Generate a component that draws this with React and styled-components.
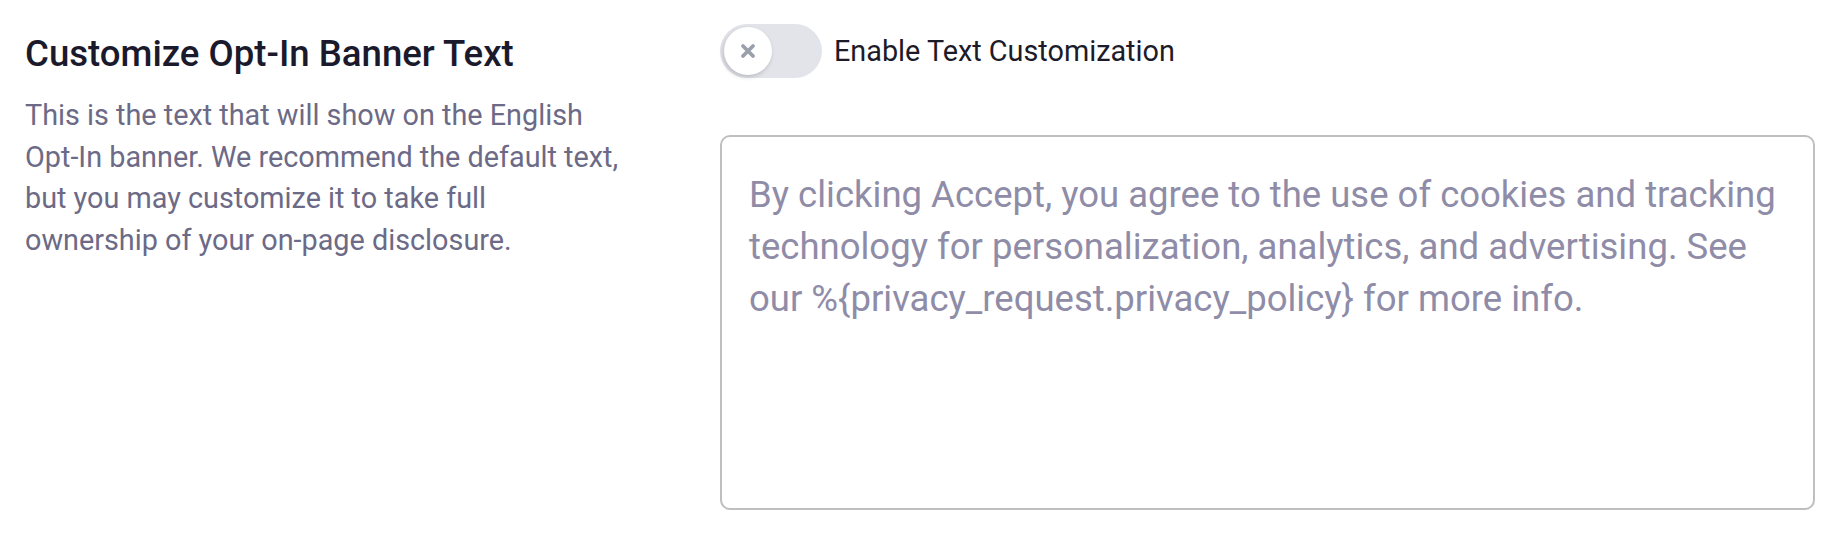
import React from 'react'
import styled, {createGlobalStyle} from 'styled-components'

const GlobalStyle = createGlobalStyle`
  body {
    margin: 0;
    background: #ffffff;
    font-family: Roboto, "Liberation Sans", sans-serif;
  }
`

const App = () => {
    return(
    <>
    <GlobalStyle />
    <StyledSection>
        <Intro>
            <h2>Customize Opt-In Banner Text</h2>
            <p>This is the text that will show on the English Opt-In banner. We recommend the default text, but you may customize it to take full ownership of your on-page disclosure.</p>
        </Intro>
        <Editor>
            <ToggleRow>
                <Switch type="button" role="switch" aria-checked="false">
                    <span className="knob">
                        <svg width="16" height="16" viewBox="0 0 16 16" aria-hidden="true">
                            <path d="M3 3 L13 13 M13 3 L3 13" stroke="#9aa0ab" strokeWidth="3.8" strokeLinecap="round" />
                        </svg>
                    </span>
                </Switch>
                <label>Enable Text Customization</label>
            </ToggleRow>
            <BannerText
                disabled
                placeholder="By clicking Accept, you agree to the use of cookies and tracking technology for personalization, analytics, and advertising. See our %{privacy_request.privacy_policy} for more info."
            />
        </Editor>
    </StyledSection>
    </>
    )
}
//Style

const StyledSection = styled.section`
display: grid;
grid-template-columns: 600px 1fr;
column-gap: 95px;
padding: 24px 25px;
`

const Intro = styled.div`
h2{
    margin: 8px 0 0;
    font-size: 36.6px;
    line-height: 44px;
    font-weight: 500;
    color: #1b1a2c;
}
p{
    margin: 19px 0 0;
    font-size: 28.8px;
    line-height: 41.5px;
    color: #6c6a86;
}
`

const Editor = styled.div`
display: flex;
flex-direction: column;
`

const ToggleRow = styled.div`
display: flex;
align-items: center;
gap: 12px;
height: 54px;
label{
    font-size: 28.8px;
    line-height: 34px;
    color: #1c1b29;
}
`

const Switch = styled.button`
position: relative;
width: 102px;
height: 54px;
padding: 0;
border: none;
border-radius: 27px;
background: #e3e4e9;
cursor: pointer;
.knob{
    position: absolute;
    top: 3px;
    left: 4px;
    width: 48px;
    height: 48px;
    border-radius: 50%;
    background: #ffffff;
    box-shadow: -1px 2px 4px rgba(40, 40, 60, 0.22);
    display: flex;
    align-items: center;
    justify-content: center;
}
`

const BannerText = styled.textarea`
margin-top: 57px;
box-sizing: border-box;
width: 100%;
height: 375px;
padding: 32px 14px 30px 27px;
border: 2px solid #bfbfbf;
border-radius: 10px;
background: #ffffff;
resize: none;
font-family: Roboto, "Liberation Sans", sans-serif;
font-size: 36.5px;
line-height: 52px;
color: #8f8ca8;
&::placeholder{
    color: #8f8ca8;
    opacity: 1;
}
`

export default App
